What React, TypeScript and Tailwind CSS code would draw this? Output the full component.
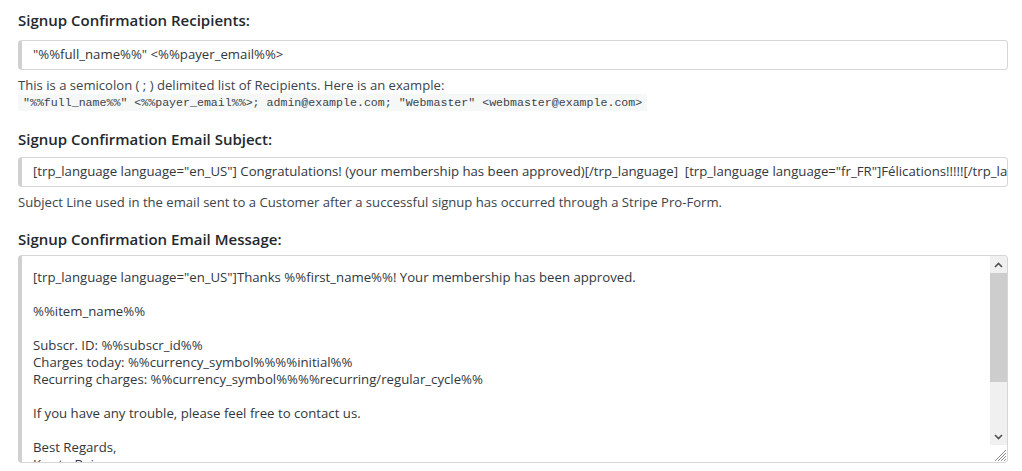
const font = { fontFamily: '"Open Sans", "Noto Sans", sans-serif' };

function Heading({ children }: { children: React.ReactNode }) {
  return <h3 className="text-[15px] font-semibold text-[#23282d] leading-5">{children}</h3>;
}

function Field({ value }: { value: string }) {
  return (
    <div className="h-[30px] rounded border border-[#d6d6d6] border-l-4 border-l-[#d0d0d0] flex items-center pl-[11px] overflow-hidden bg-white">
      <span className="whitespace-pre text-[13.2px] text-[#32373c]">{value}</span>
    </div>
  );
}

const message = `[trp_language language="en_US"]Thanks %%first_name%%! Your membership has been approved.

%%item_name%%

Subscr. ID: %%subscr_id%%
Charges today: %%currency_symbol%%%%initial%%
Recurring charges: %%currency_symbol%%%%recurring/regular_cycle%%

If you have any trouble, please feel free to contact us.

Best Regards,
Key to Being`;

export default function App() {
  return (
    <div className="bg-white w-[1022px] h-[471px] overflow-hidden pl-[18px] pr-[14px] pt-[10px]" style={font}>
      <Heading>Signup Confirmation Recipients:</Heading>
      <div className="mt-[10px]">
        <Field value={'"%%full_name%%" <%%payer_email%%>'} />
      </div>
      <p className="mt-[6px] text-[13.1px] text-[#3c434a] leading-[18px]">
        This is a semicolon ( ; ) delimited list of Recipients. Here is an example:
      </p>
      <div className="flex">
        <code className="bg-[#f6f7f7] px-[5px] text-[11.6px] leading-[17px] text-[#3c434a] font-['Liberation_Mono',monospace]">
          "%%full_name%%" &lt;%%payer_email%%&gt;; admin@example.com; "Webmaster" &lt;webmaster@example.com&gt;
        </code>
      </div>

      <div className="mt-[18px]">
        <Heading>Signup Confirmation Email Subject:</Heading>
      </div>
      <div className="mt-[8px]">
        <Field value={'[trp_language language="en_US"] Congratulations! (your membership has been approved)[/trp_language]  [trp_language language="fr_FR"]Félications!!!!![/trp_language]'} />
      </div>
      <p className="mt-[6px] text-[13.1px] text-[#3c434a] leading-[18px]">
        Subject Line used in the email sent to a Customer after a successful signup has occurred through a Stripe Pro-Form.
      </p>

      <div className="mt-[18px]">
        <Heading>Signup Confirmation Email Message:</Heading>
      </div>
      <div className="mt-[6px] h-[208px] rounded border border-[#d6d6d6] border-l-4 border-l-[#d0d0d0] flex overflow-hidden bg-white">
        <div className="flex-1 pl-[11px] pt-[13px] whitespace-pre-wrap text-[13.2px] leading-[17px] text-[#32373c] overflow-hidden">
          {message}
        </div>
        <div className="w-[17px] flex flex-col bg-[#f0f0f0]">
          <div className="h-[17px] flex items-center justify-center">
            <svg width="9" height="6" viewBox="0 0 9 6"><path d="M1 5 L4.5 1.5 L8 5" stroke="#505050" strokeWidth="1.6" fill="none" /></svg>
          </div>
          <div className="h-[109px] bg-[#cdcdcd]" />
          <div className="flex-1" />
          <div className="h-[17px] flex items-center justify-center">
            <svg width="9" height="6" viewBox="0 0 9 6"><path d="M1 1 L4.5 4.5 L8 1" stroke="#505050" strokeWidth="1.6" fill="none" /></svg>
          </div>
          <div className="h-[17px] bg-white flex items-end justify-end">
            <svg width="15" height="15" viewBox="0 0 15 15">
              <path d="M14 3 L3 14 M14 6 L6 14 M14 9 L9 14 M14 12 L12 14" stroke="#8a8a8a" strokeWidth="1" />
            </svg>
          </div>
        </div>
      </div>
    </div>
  );
}
